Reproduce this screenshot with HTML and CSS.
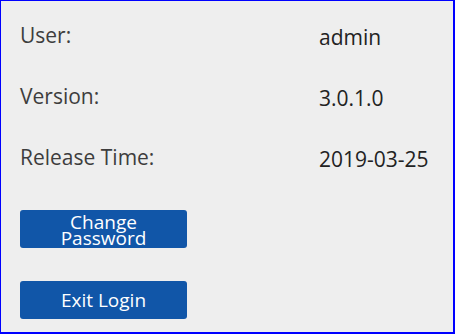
FILE: index.html
```html
<!DOCTYPE html>
<html>
<head>
<meta charset="utf-8">
<link rel="stylesheet" href="styles.css">
</head>
<body>
<div class="panel">
  <div class="info">
    <div class="label">User:</div><div class="value">admin</div>
    <div class="label">Version:</div><div class="value">3.0.1.0</div>
    <div class="label">Release Time:</div><div class="value">2019-03-25</div>
  </div>
  <div class="actions">
    <button class="btn btn-two">Change<br>Password</button>
    <button class="btn">Exit Login</button>
  </div>
</div>
</body>
</html>
```
FILE: styles.css
```css
html, body {
  margin: 0;
  padding: 0;
  background: #ffffff;
}
.panel {
  box-sizing: border-box;
  width: 455px;
  height: 334px;
  border: 1px solid #0000ff;
  border-right-width: 2px;
  border-bottom-width: 2px;
  background: #eeeeee;
  padding: 19px 0 0 19px;
  font-family: "Open Sans", "Noto Sans", sans-serif;
  color: #3d3d3d;
}
.info {
  display: grid;
  grid-template-columns: 299px auto;
  grid-auto-rows: 61px;
  font-size: 21px;
  line-height: 28px;
}
.label {
  padding-top: 1px;
}
.value {
  padding-top: 3px;
  color: #222;
}
.actions {
  display: flex;
  flex-direction: column;
  gap: 33px;
  margin-top: 7px;
}
.btn {
  width: 167px;
  height: 38px;
  border: none;
  border-radius: 3px;
  background: #1156a8;
  color: #ffffff;
  font-family: "Open Sans", "Noto Sans", sans-serif;
  font-size: 19px;
  padding: 0;
}
.btn-two {
  line-height: 16px;
  padding-top: 1px;
}
```
